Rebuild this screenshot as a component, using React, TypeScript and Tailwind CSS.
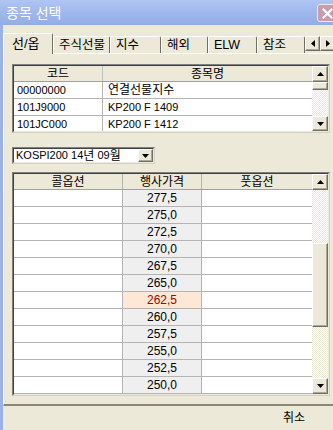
import React from 'react';

const strikes = ['277,5', '275,0', '272,5', '270,0', '267,5', '265,0', '262,5', '260,0', '257,5', '255,0', '252,5', '250,0'];
const atm = '262,5';

const codes = [
  { code: '00000000', name: '연결선물지수', kr: true },
  { code: '101J9000', name: 'KP200 F 1409', kr: false },
  { code: '101JC000', name: 'KP200 F 1412', kr: false },
];

const tabs = [
  { label: '주식선물', w: 'w-[57px]' },
  { label: '지수', w: 'w-[51px]' },
  { label: '해외', w: 'w-[47px]' },
  { label: 'ELW', w: 'w-[49px]' },
  { label: '참조', w: 'w-[48px]' },
];

function Tri({ dir }: { dir: 'up' | 'down' | 'left' | 'right' }) {
  if (dir === 'up' || dir === 'down') {
    return (
      <svg width="7" height="4" viewBox="0 0 7 4">
        <polygon points={dir === 'up' ? '0,4 7,4 3.5,0' : '0,0 7,0 3.5,4'} fill="#000" />
      </svg>
    );
  }
  return (
    <svg width="4" height="7" viewBox="0 0 4 7">
      <polygon points={dir === 'left' ? '4,0 4,7 0,3.5' : '0,0 0,7 4,3.5'} fill="#000" />
    </svg>
  );
}

function Raised({ className, children }: { className: string; children?: React.ReactNode }) {
  return (
    <div
      className={
        'flex shrink-0 items-center justify-center bg-[#ece9d8] border border-t-white border-l-white border-r-[#716f64] border-b-[#716f64] shadow-[inset_-1px_-1px_0_#aca899] ' +
        className
      }
    >
      {children}
    </div>
  );
}

function Track({ className }: { className: string }) {
  return <div className={'bg-[repeating-conic-gradient(#ece9d8_0%_25%,#ffffff_0%_50%)] bg-[length:2px_2px] ' + className} />;
}

function Sunken({ className, children }: { className: string; children: React.ReactNode }) {
  return (
    <div className={'border border-t-[#808080] border-l-[#808080] border-r-[#d4d0c8] border-b-[#d4d0c8] ' + className}>
      <div className="h-full w-full border border-t-[#404040] border-l-[#404040] border-r-[#ece9d8] border-b-[#ece9d8] flex overflow-hidden">
        {children}
      </div>
    </div>
  );
}

export default function App() {
  return (
    <div className="w-[333px] h-[430px] overflow-hidden flex flex-col bg-[#ece9d8] text-black font-[family-name:Liberation_Sans,Noto_Sans_CJK_KR,sans-serif]">
      {/* Title bar */}
      <div className="h-[25px] shrink-0 flex items-center overflow-hidden bg-linear-to-b from-[#b0c5f3] via-[#9fb7eb] to-[#94ade7]">
        <div className="flex-1 pl-[6px] text-[14px] leading-none text-white">종목 선택</div>
        <div className="w-[21px] h-[18px] -mr-[5px] mt-[1px] shrink-0 flex items-center justify-center rounded-[3px] border border-[#f3e6ea] bg-[#c89ca8]">
          <svg width="11" height="11" viewBox="0 0 11 11">
            <path d="M1.5 1.5 L9.5 9.5 M9.5 1.5 L1.5 9.5" stroke="#fff" strokeWidth="2.2" strokeLinecap="square" />
          </svg>
        </div>
      </div>

      <div className="flex flex-1">
        <div className="w-[3px] shrink-0 bg-[#9cb1e7]" />
        <div className="flex-1 flex flex-col min-w-0">
          {/* Tabs */}
          <div className="mt-[8px] h-[20px] flex items-end shrink-0">
            <div className="relative z-10 w-[50px] h-[21px] -mb-[1px] shrink-0 flex items-center pl-[8px] pb-[1px] bg-[#ece9d8] border-t border-l border-r border-t-white border-l-white border-r-[#716f64] rounded-t-[2px] text-[13px] leading-none">
              선/옵
            </div>
            {tabs.map((t) => (
              <div
                key={t.label}
                className={
                  t.w +
                  ' h-[17px] shrink-0 flex items-center pl-[5px] border-t border-l border-r border-t-white border-l-white border-r-[#716f64] rounded-t-[2px] text-[12.5px] leading-none whitespace-nowrap'
                }
              >
                {t.label}
              </div>
            ))}
            <Raised className="w-[15px] h-[15px] mb-[2px]">
              <Tri dir="left" />
            </Raised>
            <Raised className="w-[15px] h-[15px] mb-[2px]">
              <Tri dir="right" />
            </Raised>
          </div>

          {/* Tab panel */}
          <div className="shrink-0 border-t border-l border-b-2 border-t-white border-l-white border-b-[#8a8778] pl-[8px] pt-[10px] pb-[8px]">
            {/* Code list */}
            <Sunken className="w-[318px] h-[69px]">
              <div className="w-[298px] flex flex-col">
                <div className="h-[16px] shrink-0 flex border-b border-[#a0a0a0] text-[12px] leading-none">
                  <div className="w-[89px] flex items-center justify-center border-r border-[#c0c0c0]">코드</div>
                  <div className="flex-1 flex items-center justify-center">종목명</div>
                </div>
                {codes.map((c) => (
                  <div key={c.code} className="h-[17px] shrink-0 flex bg-white border-b border-[#b4b4b4] text-[11px] leading-none">
                    <div className="w-[89px] flex items-center pl-[3px] border-r border-[#b4b4b4]">{c.code}</div>
                    <div className={c.kr ? 'flex-1 flex items-center pl-[5px] text-[12px]' : 'flex-1 flex items-center pl-[5px]'}>{c.name}</div>
                  </div>
                ))}
              </div>
              <div className="w-[16px] flex flex-col">
                <Raised className="h-[16px]">
                  <Tri dir="up" />
                </Raised>
                <Raised className="h-[8px]" />
                <Track className="flex-1" />
                <Raised className="h-[15px]">
                  <Tri dir="down" />
                </Raised>
              </div>
            </Sunken>

            {/* Combo */}
            <Sunken className="mt-[14px] w-[143px] h-[17px]">
              <div className="flex-1 bg-white flex items-center pl-[2px] text-[11px] leading-none whitespace-nowrap">
                KOSPI200 14<span className="text-[12px]">년</span>&nbsp;09<span className="text-[12px]">월</span>
              </div>
              <Raised className="w-[15px]">
                <Tri dir="down" />
              </Raised>
            </Sunken>

            {/* Option board */}
            <Sunken className="mt-[8px] w-[318px] h-[224px]">
              <div className="w-[298px] flex flex-col">
                <div className="h-[16px] shrink-0 grid grid-cols-[109px_79px_110px] border-b border-[#a0a0a0] text-[12px] leading-none">
                  <div className="flex items-center justify-center border-r border-[#b4b4b4]">콜옵션</div>
                  <div className="flex items-center justify-center border-r border-[#b4b4b4]">행사가격</div>
                  <div className="flex items-center justify-center">풋옵션</div>
                </div>
                {strikes.map((s) => (
                  <div key={s} className="h-[17px] shrink-0 grid grid-cols-[109px_79px_110px] border-b border-[#b4b4b4] text-[12px] leading-none">
                    <div className="bg-white border-r border-[#b4b4b4]" />
                    <div
                      className={
                        s === atm
                          ? 'flex items-center justify-center bg-[#fde8d5] text-[#a80000] border-r border-[#b4b4b4]'
                          : 'flex items-center justify-center bg-[#efefef] border-r border-[#b4b4b4]'
                      }
                    >
                      {s}
                    </div>
                    <div className="bg-white" />
                  </div>
                ))}
              </div>
              <div className="w-[16px] flex flex-col">
                <Raised className="h-[16px]">
                  <Tri dir="up" />
                </Raised>
                <Track className="h-[53px]" />
                <Raised className="h-[84px]" />
                <Track className="flex-1" />
                <Raised className="h-[16px]">
                  <Tri dir="down" />
                </Raised>
              </div>
            </Sunken>
          </div>

          {/* Footer */}
          <div className="flex-1 flex justify-end items-start pt-[6px] pr-[28px] text-[12px] leading-none">
            <span>취소</span>
          </div>
        </div>
      </div>
    </div>
  );
}
